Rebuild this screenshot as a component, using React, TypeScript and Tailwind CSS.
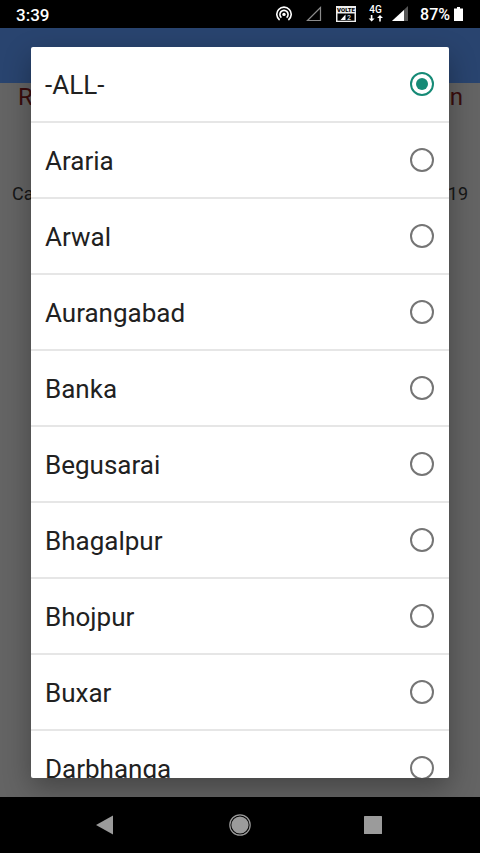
import { useState } from "react";

const districts = [
  "-ALL-",
  "Araria",
  "Arwal",
  "Aurangabad",
  "Banka",
  "Begusarai",
  "Bhagalpur",
  "Bhojpur",
  "Buxar",
  "Darbhanga",
];

function StatusBar() {
  return (
    <header className="flex h-7 shrink-0 items-center bg-black px-4 text-white">
      <span className="flex-1 pt-0.5 text-[17px] font-medium leading-7">3:39</span>
      <svg className="mr-3.5 h-4 w-4" viewBox="0 0 16 16" fill="none" stroke="white" strokeWidth="1.6">
        <path d="M3.600 14A7.200 7.200 0 1 1 12.400 14" />
        <path d="M5.400 11.600A4.100 4.100 0 1 1 10.600 11.600" />
        <circle cx="8" cy="8.400" r="1.700" fill="white" stroke="none" />
      </svg>
      <svg className="mr-3.5 h-4 w-4" viewBox="0 0 16 16" fill="none" stroke="#8b8b8b" strokeWidth="1.2">
        <path d="M1.5 14.5H14.500V1.500Z" />
      </svg>
      <svg className="mr-3 h-[18px] w-5" viewBox="0 0 20 18">
        <rect x="0" y="1" width="20" height="16" fill="#eee" />
        <text x="10" y="7.300" textAnchor="middle" fontSize="6" fontWeight="900" fill="black">VOLTE</text>
        <rect x="1.500" y="8.5" width="17" height="7.200" fill="black" />
        <path d="M4.5 15H9.5V9.5Z" fill="white" />
        <text x="11" y="15" fontSize="7" fontWeight="500" fill="#ddd">2</text>
      </svg>
      <svg className="mr-2 h-5 w-4" viewBox="0 0 16 20" fill="white">
        <text x="7.500" y="9" textAnchor="middle" fontSize="10" fontWeight="500">4G</text>
        <path d="M2.800 11h1.600v3.500H6.600L3.600 17.500 0.600 14.500h2.200ZM11.200 17.500h1.600V14H15L12 11 9 14h2.200Z" />
      </svg>
      <svg className="mr-3 h-4 w-4" viewBox="0 0 16 16">
        <path d="M0 15H16V0Z" fill="#555" />
        <path d="M0 15H12V4Z" fill="white" />
      </svg>
      <span className="mr-1 pt-0.5 text-base font-medium leading-7">87%</span>
      <svg className="mr-px h-4 w-[9px]" viewBox="0 0 9 16" fill="white">
        <path d="M3 1h3v1.500h3V15H0V2.500h3Z" />
      </svg>
    </header>
  );
}

function NavigationBar() {
  return (
    <nav className="flex h-14 shrink-0 items-center justify-center gap-28 bg-black">
      <button type="button" aria-label="Back">
        <svg className="block h-5 w-5" viewBox="0 0 20 20" fill="#9b9b9b">
          <path d="M0 10 17 0.500V19.500Z" />
        </svg>
      </button>
      <button type="button" aria-label="Home">
        <svg className="block h-6 w-6" viewBox="0 0 24 24">
          <circle cx="12" cy="12" r="10.200" fill="none" stroke="#9b9b9b" strokeWidth="1.200" />
          <circle cx="12" cy="12" r="8.600" fill="#9b9b9b" />
        </svg>
      </button>
      <button type="button" aria-label="Recent apps">
        <svg className="block h-5 w-5" viewBox="0 0 20 20">
          <rect y="1" width="18" height="18" rx="0.500" fill="#9b9b9b" />
        </svg>
      </button>
    </nav>
  );
}

export default function App() {
  const [selected, setSelected] = useState("-ALL-");
  return (
    <div className="flex h-screen flex-col font-['Roboto','Noto_Sans',sans-serif]">
      <StatusBar />
      <main className="relative min-h-0 flex-1 overflow-hidden bg-[#646464]">
        <div className="h-[55px] bg-[#29446f]" />
        <div className="flex justify-between pl-[18px] pr-[17px] text-2xl leading-7 text-[#3a0c0c]">
          <span>R</span>
          <span>n</span>
        </div>
        <div className="mt-[69px] flex justify-between px-3 text-lg leading-7 text-[#161616]">
          <span>Ca</span>
          <span>19</span>
        </div>
        <div className="absolute inset-0 flex px-[31px] py-[19px]">
          <div
            role="dialog"
            aria-label="Select district"
            className="flex-1 overflow-hidden rounded-xs bg-white shadow-[0_10px_28px_rgba(0,0,0,0.32)]"
          >
            {districts.map((name) => (
              <label
                key={name}
                className="flex h-[76px] items-center justify-between border-b-2 border-[#e6e6e6] pl-3.5 pr-[15px] text-[26px] leading-8 text-[#212121]"
              >
                <span className="pt-0.5">{name}</span>
                <input
                  type="radio"
                  name="district"
                  value={name}
                  checked={selected === name}
                  onChange={() => setSelected(name)}
                  className="grid h-6 w-6 appearance-none place-items-center rounded-full border-2 border-[#757575] before:h-3 before:w-3 before:rounded-full checked:border-[#168a76] checked:before:bg-[#168a76]"
                />
              </label>
            ))}
          </div>
        </div>
      </main>
      <NavigationBar />
    </div>
  );
}
